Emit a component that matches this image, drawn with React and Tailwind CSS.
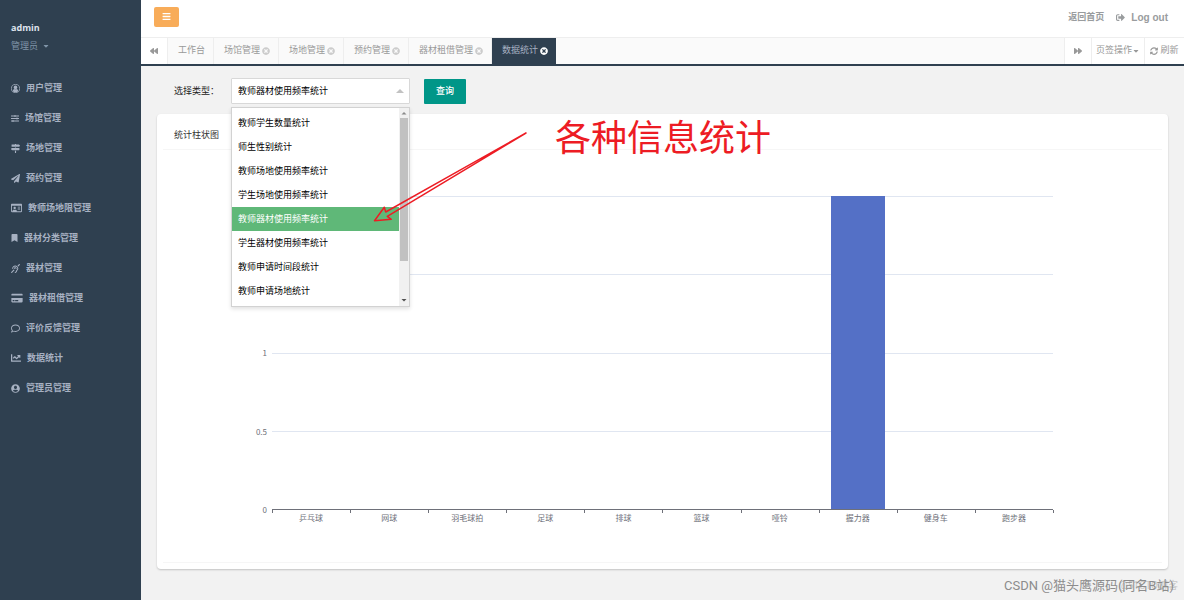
import { useState } from 'react';
import {
  FaBackward,
  FaBars,
  FaBookmark,
  FaCaretDown,
  FaChartLine,
  FaCreditCard,
  FaDeaf,
  FaForward,
  FaMapSigns,
  FaPaperPlane,
  FaRegComment,
  FaRegIdCard,
  FaSignOutAlt,
  FaSlidersH,
  FaSyncAlt,
  FaTimesCircle,
  FaUserCircle,
} from 'react-icons/fa';

function UserRing({ className }) {
  return (
    <svg viewBox="0 0 18 18" className={className} fill="currentColor">
      <circle cx="9" cy="9" r="8.2" fill="none" stroke="currentColor" strokeWidth="1.5" />
      <circle cx="9" cy="6.8" r="3.6" />
      <path d="M3.4 14.6c.3-3 1.8-4.6 3-4.8 1.600.9 3.600.9 5.200 0 1.200.2 2.700 1.800 3 4.800-3 2.800-8.200 2.800-11.200 0Z" />
    </svg>
  );
}

const menus = [
  { name: '用户管理', icon: UserRing, size: 'w-[9px] h-[9px]' },
  { name: '场馆管理', icon: FaSlidersH, size: 'w-2 h-[9px]' },
  { name: '场地管理', icon: FaMapSigns, size: 'w-[9px] h-[9px]' },
  { name: '预约管理', icon: FaPaperPlane, size: 'w-[9px] h-[9px]' },
  { name: '教师场地限管理', icon: FaRegIdCard, size: 'w-[11px] h-[10px]' },
  { name: '器材分类管理', icon: FaBookmark, size: 'w-[7px] h-2' },
  { name: '器材管理', icon: FaDeaf, size: 'w-[9px] h-[9px]' },
  { name: '器材租借管理', icon: FaCreditCard, size: 'w-3 h-[10px]' },
  { name: '评价反馈管理', icon: FaRegComment, size: 'w-[9px] h-[9px]' },
  { name: '数据统计', icon: FaChartLine, size: 'w-[10px] h-[10px]' },
  { name: '管理员管理', icon: FaUserCircle, size: 'w-[9px] h-[9px]' },
];

const tabs = ['工作台', '场馆管理', '场地管理', '预约管理', '器材租借管理', '数据统计'];

const types = [
  '教师学生数量统计',
  '师生性别统计',
  '教师场地使用频率统计',
  '学生场地使用频率统计',
  '教师器材使用频率统计',
  '学生器材使用频率统计',
  '教师申请时间段统计',
  '教师申请场地统计',
];

const chartData = [
  { name: '乒乓球', value: 0 },
  { name: '网球', value: 0 },
  { name: '羽毛球拍', value: 0 },
  { name: '足球', value: 0 },
  { name: '排球', value: 0 },
  { name: '篮球', value: 0 },
  { name: '哑铃', value: 0 },
  { name: '握力器', value: 2 },
  { name: '健身车', value: 0 },
  { name: '跑步器', value: 0 },
];

const maxValue = 2;

function Sidebar() {
  return (
    <aside className="w-[141px] shrink-0 bg-[#2f4050] text-[#a7b1c2]">
      <div className="px-[11px] pt-[19px]">
        <p className="text-[9px] leading-[18px] font-bold text-[#dfe4ed] font-['Open_Sans','Noto_Sans_CJK_SC',sans-serif]">
          admin
        </p>
        <button className="flex items-center gap-1 text-[9px] leading-[18px] text-[#8095a8]">
          管理员
          <FaCaretDown className="size-2" />
        </button>
      </div>
      <nav className="mt-[18px]">
        {menus.map(({ name, icon: Icon, size }) => (
          <a
            key={name}
            href="#"
            className="flex h-[30px] items-center gap-[6px] px-[11px] text-[9px] font-semibold"
          >
            <Icon className={size} />
            <span className="pt-[2px]">{name}</span>
          </a>
        ))}
      </nav>
    </aside>
  );
}

function Header() {
  return (
    <header className="flex h-[37px] items-center justify-between bg-white pr-4 pb-1 pl-[13px]">
      <button
        aria-label="菜单"
        className="flex h-5 w-[25px] items-center justify-center rounded-[2px] bg-[#f8ac59] text-white"
      >
        <FaBars className="size-[9px]" />
      </button>
      <div className="flex items-center gap-3 pt-[2px] text-[9px] font-semibold text-[#999c9e]">
        <a href="#">返回首页</a>
        <a href="#" className="flex items-center gap-[6px] text-[10px] font-bold">
          <FaSignOutAlt className="size-[9px]" />
          Log out
        </a>
      </div>
    </header>
  );
}

function TabBar() {
  const [active, setActive] = useState('数据统计');

  return (
    <div className="flex h-[29px] border-t border-b-2 border-t-[#eee] border-b-[#2f4050] bg-[#fafafa] text-[9px] text-[#999]">
      <button
        aria-label="向左"
        className="flex w-[27px] items-center justify-center border-r border-[#eee] bg-white"
      >
        <FaBackward className="size-2" />
      </button>
      <div className="flex flex-1">
        {tabs.map((tab) => (
          <button
            key={tab}
            onClick={() => setActive(tab)}
            className={
              tab === active
                ? 'flex items-center gap-[2px] bg-[#2f4050] pr-2 pl-[10px] text-[#a7b1c2]'
                : 'flex items-center gap-[2px] border-r border-[#eee] pr-2 pl-[10px]'
            }
          >
            {tab}
            {tab !== '工作台' && (
              <FaTimesCircle
                className={tab === active ? 'size-2 text-white' : 'size-2 text-[#ccc]'}
              />
            )}
          </button>
        ))}
      </div>
      <button
        aria-label="向右"
        className="flex w-[27px] items-center justify-center border-l border-[#eee] bg-white"
      >
        <FaForward className="size-2" />
      </button>
      <button className="flex w-[53px] items-center justify-center border-l border-[#eee] bg-white">
        页签操作
        <FaCaretDown className="size-2" />
      </button>
      <button className="flex w-10 items-center justify-center gap-[2px] border-l border-[#eee] bg-white">
        <FaSyncAlt className="size-2" />
        刷新
      </button>
    </div>
  );
}

function TypeSelect({ value, onChange }) {
  return (
    <div className="relative w-[179px]">
      <select
        id="type"
        value={value}
        onChange={(e) => onChange(e.target.value)}
        className="block h-[26px] w-full appearance-none rounded-[1px] border border-[#d8d8d8] bg-white px-[6px] pt-[2px] text-[9px] text-black"
      >
        {types.map((type) => (
          <option key={type}>{type}</option>
        ))}
      </select>
      <svg viewBox="0 0 8 4" className="pointer-events-none absolute top-[11px] right-[6px] h-1 w-2">
        <path d="M0 4 4 0 8 4Z" fill="#c2c2c2" />
      </svg>
      <div className="absolute top-[29px] left-0 z-10 flex h-[200px] w-full border border-[#d2d2d2] bg-white shadow-[0_2px_4px_rgba(0,0,0,0.12)]">
        <ul role="listbox" aria-label="选择类型" className="flex-1 py-[3px]">
          {types.map((type) => (
            <li
              key={type}
              role="option"
              aria-selected={type === value}
              onClick={() => onChange(type)}
              className={
                type === value
                  ? 'h-6 bg-[#5fb878] px-[6px] text-[9px] leading-6 text-white'
                  : 'h-6 px-[6px] text-[9px] leading-6 text-black'
              }
            >
              {type}
            </li>
          ))}
        </ul>
        {/* 滚动条 */}
        <div className="flex w-[10px] flex-col items-center bg-[#f1f1f1]">
          <svg viewBox="0 0 10 10" className="size-[10px]">
            <path d="M2.5 6.5 5 4 7.5 6.5Z" fill="#8a8a8a" />
          </svg>
          <div className="h-[143px] w-2 bg-[#c1c1c1]" />
          <svg viewBox="0 0 10 10" className="mt-auto mb-px size-[10px]">
            <path d="M2.5 4 5 6.5 7.5 4Z" fill="#505050" />
          </svg>
        </div>
      </div>
    </div>
  );
}

function BarChart() {
  return (
    <div className="flex px-[108px] pt-[46px] pb-[29px] text-[8px] text-[#6e7079]">
      <div className="relative w-px">
        <div className="absolute right-[5px] bottom-[9px] flex h-[169px] flex-col justify-between text-right leading-3 font-['Noto_Sans_CJK_SC',sans-serif]">
          <span>1</span>
          <span>0.5</span>
          <span>0</span>
        </div>
      </div>
      <div className="flex-1">
        <div className="relative flex h-[314px] flex-col border-b border-[#6e7079]">
          <div className="flex-1 border-t border-[#e0e6f1]" />
          <div className="flex-1 border-t border-[#e0e6f1]" />
          <div className="flex-1 border-t border-[#e0e6f1]" />
          <div className="flex-1 border-t border-[#e0e6f1]" />
          <div className="absolute inset-0 grid grid-cols-10 items-end">
            {chartData.map((item) => (
              <div
                key={item.name}
                className="mx-auto w-[69%] bg-[#5470c6]"
                style={{ height: `${(item.value / maxValue) * 100}%` }}
              />
            ))}
          </div>
        </div>
        <div className="grid grid-cols-10 text-center">
          {chartData.map((item) => (
            <div key={item.name}>
              <div className="h-[3px] border-l border-[#6e7079]" />
              <div className="leading-3">{item.name}</div>
            </div>
          ))}
        </div>
      </div>
      <div className="mt-[314px] h-[3px] w-px bg-[#6e7079]" />
    </div>
  );
}

function Annotation() {
  return (
    <div className="pointer-events-none absolute top-0 left-0 z-20">
      <svg viewBox="0 0 160 95" className="absolute top-[62px] left-[229px] h-[95px] w-[160px]">
        <path
          d="M156 5 15.7 84 14.3 79.3 4.5 92.7 21.3 91.3 17.3 88.3Z"
          fill="none"
          stroke="#ed1c24"
          strokeWidth="1.5"
          strokeLinejoin="round"
        />
      </svg>
      <p className="absolute top-[49px] left-[414px] text-[36px] leading-[48px] whitespace-nowrap text-[#ed1c24]">
        各种信息统计
      </p>
    </div>
  );
}

export default function App() {
  const [type, setType] = useState('教师器材使用频率统计');

  return (
    <div className="flex min-h-screen bg-[#f2f2f2] font-['Liberation_Sans','Noto_Sans_CJK_SC',sans-serif]">
      <Sidebar />
      <div className="flex min-w-0 flex-1 flex-col">
        <Header />
        <TabBar />
        <main className="relative flex-1 px-4 pt-3">
          <form
            className="flex h-[26px] items-center pl-[17px]"
            onSubmit={(e) => e.preventDefault()}
          >
            <label htmlFor="type" className="w-[57px] pt-[2px] text-[9px] text-[#222]">
              选择类型：
            </label>
            <TypeSelect value={type} onChange={setType} />
            <button className="ml-[14px] h-[25px] w-[42px] rounded-[1px] bg-[#009688] pt-[2px] text-[9px] font-medium text-white">
              查询
            </button>
          </form>
          <section className="mt-[10px] rounded-[4px] bg-white px-[6px] pb-[6px] shadow-[0_1px_2px_rgba(0,0,0,0.2)]">
            <h2 className="border-b border-[#f6f6f6] px-[11px] pt-2 text-[9px] leading-[27px] text-[#333]">
              统计柱状图
            </h2>
            <div className="border-b border-[#f6f6f6] pb-2">
              <BarChart />
            </div>
          </section>
          <Annotation />
          <div className="absolute right-[6px] bottom-1 h-5 w-[174px] text-[13px] leading-5 whitespace-nowrap font-['Roboto','Noto_Sans_CJK_SC',sans-serif]">
            <span className="absolute right-0 text-[10px] text-[#c8c8c8]">@51CTO博客</span>
            <span className="absolute left-0 text-[#8c8c8c]">CSDN @猫头鹰源码(同名B站)</span>
          </div>
        </main>
      </div>
    </div>
  );
}
